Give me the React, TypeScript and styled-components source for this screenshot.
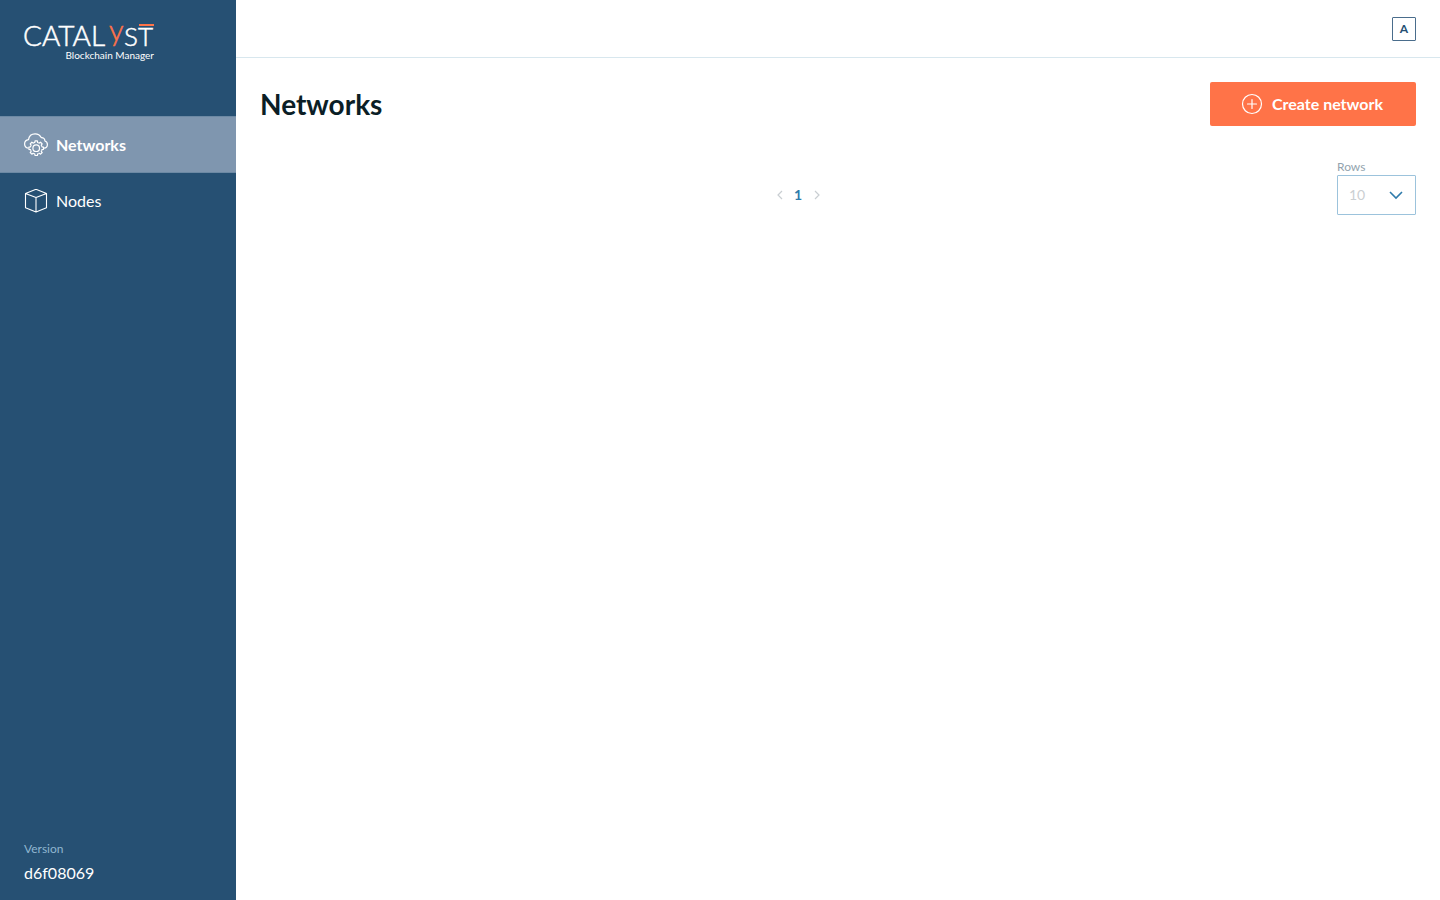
import React from "react";
import styled, { createGlobalStyle } from "styled-components";

const GlobalStyle = createGlobalStyle`
  *, *::before, *::after { box-sizing: border-box; }
  body {
    margin: 0;
    background: #fff;
    color: #0b1e26;
    font-family: Lato, "Open Sans", sans-serif;
    font-size: 16px;
    line-height: 24px;
  }
  button, select { font-family: inherit; }
`;

const Layout = styled.div`
  display: flex;
  min-height: 100vh;
`;

const Sidebar = styled.aside`
  display: flex;
  flex-direction: column;
  flex: 0 0 236px;
  background: #265073;
  color: #fff;
`;

const LogoLink = styled.a`
  display: block;
  padding: 20px 24px 52px;
  height: 116px;
`;

const LogoSvg = styled.svg`
  display: block;
  overflow: visible;
`;

const NavList = styled.nav`
  display: flex;
  flex-direction: column;
`;

const NavLink = styled.a<{ $active?: boolean }>`
  display: flex;
  align-items: center;
  gap: 8px;
  height: ${(p) => (p.$active ? 57 : 56)}px;
  padding: 0 24px;
  border: solid ${(p) => (p.$active ? "#6c89a4" : "transparent")};
  border-width: 1px 0;
  background: ${(p) => (p.$active ? "#7f96af" : "transparent")};
  color: #fff;
  font-weight: ${(p) => (p.$active ? 700 : 400)};
  text-decoration: none;
`;

const Label = styled.span`
  padding-bottom: 2px;
`;

const Version = styled.footer`
  margin-top: auto;
  padding: 0 24px 15px;
`;

const Caption = styled.div`
  color: #90b6d0;
  font-size: 12px;
  line-height: 24px;
`;

const Main = styled.div`
  display: flex;
  flex-direction: column;
  flex: 1;
  min-width: 0;
`;

const TopBar = styled.header`
  display: flex;
  align-items: center;
  justify-content: flex-end;
  height: 58px;
  padding: 0 24px;
  border-bottom: 1px solid #d8e7ee;
`;

const Avatar = styled.button`
  width: 24px;
  height: 24px;
  padding: 0;
  border: 1px solid #4a6d8c;
  border-radius: 1px;
  background: #fff;
  color: #265073;
  font-size: 12px;
  font-weight: 700;
  line-height: 22px;
`;

const Content = styled.main`
  padding: 24px;
`;

const TitleRow = styled.div`
  display: flex;
  align-items: center;
  justify-content: space-between;
`;

const Title = styled.h1`
  margin: 0;
  font-size: 28px;
  font-weight: 700;
  line-height: 44px;
`;

const CreateButton = styled.button`
  display: flex;
  align-items: center;
  gap: 8px;
  height: 44px;
  padding: 0 33px 0 30px;
  border: 0;
  border-radius: 2px;
  background: #ff7348;
  color: #fff;
  font-size: 16px;
  font-weight: 700;
`;

const ListFooter = styled.div`
  display: grid;
  grid-template-columns: 1fr auto 1fr;
  align-items: end;
  margin-top: 33px;
`;

const Pagination = styled.nav`
  display: flex;
  grid-column: 2;
  align-items: center;
  height: 40px;
  margin-right: 80px;
`;

const PageButton = styled.button<{ $current?: boolean }>`
  display: flex;
  align-items: center;
  justify-content: center;
  width: 18px;
  height: 24px;
  padding: 0;
  border: 0;
  background: none;
  color: ${(p) => (p.$current ? "#2f7bab" : "#c9ced2")};
  font-size: 14px;
  font-weight: 700;
`;

const RowsField = styled.div`
  grid-column: 3;
  justify-self: end;
  width: 79px;
`;

const RowsLabel = styled.label`
  display: block;
  color: #93a3ae;
  font-size: 12px;
  line-height: 16px;
`;

const SelectBox = styled.div`
  display: grid;
  align-items: center;
  > * { grid-area: 1 / 1; }
  svg {
    justify-self: end;
    margin-right: 12px;
    pointer-events: none;
  }
`;

const RowsSelect = styled.select`
  width: 100%;
  height: 40px;
  padding: 0 11px 2px;
  appearance: none;
  border: 1px solid #9cc3dc;
  border-radius: 1px;
  background: #fff;
  color: #cbcfd2;
  font-size: 14px;
  opacity: 1;
`;

const Logo = () => (
  <LogoSvg width="131" height="44" viewBox="0 0 131 44" role="img" aria-label="Catalyst Blockchain Manager">
    <g fill="#fff" stroke="#fff" strokeWidth="0.5" fontFamily="Lato, sans-serif" fontWeight="300">
      <text x="-1" y="26" fontSize="28">CATAL</text>
      <text x="85" y="21" fontSize="29" fill="#ff7348" stroke="#ff7348">y</text>
      <text x="100" y="26" fontSize="26">ST</text>
    </g>
    <path d="M115 5h15" stroke="#ff7348" strokeWidth="2" />
    <text x="130" y="39" textAnchor="end" fill="#fff" fontFamily="Lato, sans-serif" fontSize="10">
      Blockchain Manager
    </text>
  </LogoSvg>
);

const TOOTH_ANGLES = [0, 45, 90, 135, 180, 225, 270, 315];

const CloudGearIcon = () => (
  <svg width="24" height="24" viewBox="0 0 24 24" fill="none" stroke="#fff" strokeWidth="1.2" strokeLinejoin="round" aria-hidden="true">
    <path d="M4.2 15.2C1.9 14.7.6 13 .6 11c0-2.300 1.500-4 3.900-4.300C5 3.200 7.700.8 11.100.8c2.700 0 5 1.500 6.100 3.800 2.200-.2 3.700 1.300 3.700 3.400 1.500.5 2.500 1.800 2.500 3.400 0 1.900-1.400 3.500-3.400 3.800" />
    <circle cx="12.200" cy="15.200" r="3.300" />
    {TOOTH_ANGLES.map((angle) => (
      <path
        key={angle}
        transform={`rotate(${angle} 12.2 15.2)`}
        d="M9.950 9.770L10.800 9.400L11.050 7.900H13.350L13.600 9.400L14.450 9.770"
      />
    ))}
  </svg>
);

const CubeIcon = () => (
  <svg width="24" height="24" viewBox="0 0 24 24" fill="none" stroke="#fff" strokeWidth="1.100" strokeLinejoin="round" aria-hidden="true">
    <path d="M12 .3L22.500 4.400V18.800L12 23L1.500 18.800V4.400ZM1.500 4.400L12 8.600L22.500 4.400M12 8.600V23" />
  </svg>
);

const PlusCircleIcon = () => (
  <svg width="24" height="24" viewBox="0 0 24 24" fill="none" stroke="#fff" strokeWidth="1.200" strokeLinecap="round" aria-hidden="true">
    <circle cx="12" cy="12" r="9.500" />
    <path d="M12 7.500V16.500M7.500 12H16.500" />
  </svg>
);

const Chevron = ({ d }: { d: string }) => (
  <svg width="8" height="10" viewBox="0 0 8 10" fill="none" stroke="currentColor" strokeWidth="1.200" aria-hidden="true">
    <path d={d} />
  </svg>
);

export default function App() {
  return (
    <>
      <GlobalStyle />
      <Layout>
        <Sidebar>
          <LogoLink href="#home">
            <Logo />
          </LogoLink>
          <NavList aria-label="Main">
            <NavLink href="#networks" $active aria-current="page">
              <CloudGearIcon />
              Networks
            </NavLink>
            <NavLink href="#nodes">
              <CubeIcon />
              Nodes
            </NavLink>
          </NavList>
          <Version>
            <Caption>Version</Caption>
            <div>d6f08069</div>
          </Version>
        </Sidebar>
        <Main>
          <TopBar>
            <Avatar type="button">A</Avatar>
          </TopBar>
          <Content>
            <TitleRow>
              <Title>Networks</Title>
              <CreateButton type="button">
                <PlusCircleIcon />
                <Label>Create network</Label>
              </CreateButton>
            </TitleRow>
            <ListFooter>
              <Pagination aria-label="Pages">
                <PageButton type="button" disabled aria-label="Previous page">
                  <Chevron d="M6 1L2 5L6 9" />
                </PageButton>
                <PageButton type="button" $current>
                  <Label>1</Label>
                </PageButton>
                <PageButton type="button" disabled aria-label="Next page">
                  <Chevron d="M3 1L7 5L3 9" />
                </PageButton>
              </Pagination>
              <RowsField>
                <RowsLabel htmlFor="rows">Rows</RowsLabel>
                <SelectBox>
                  <RowsSelect id="rows" disabled defaultValue="10">
                    <option value="10">10</option>
                  </RowsSelect>
                  <svg width="16" height="16" viewBox="0 0 16 16" fill="none" stroke="#2f7bab" strokeWidth="1.600" aria-hidden="true">
                    <path d="M2 5L8 11L14 5" />
                  </svg>
                </SelectBox>
              </RowsField>
            </ListFooter>
          </Content>
        </Main>
      </Layout>
    </>
  );
}
